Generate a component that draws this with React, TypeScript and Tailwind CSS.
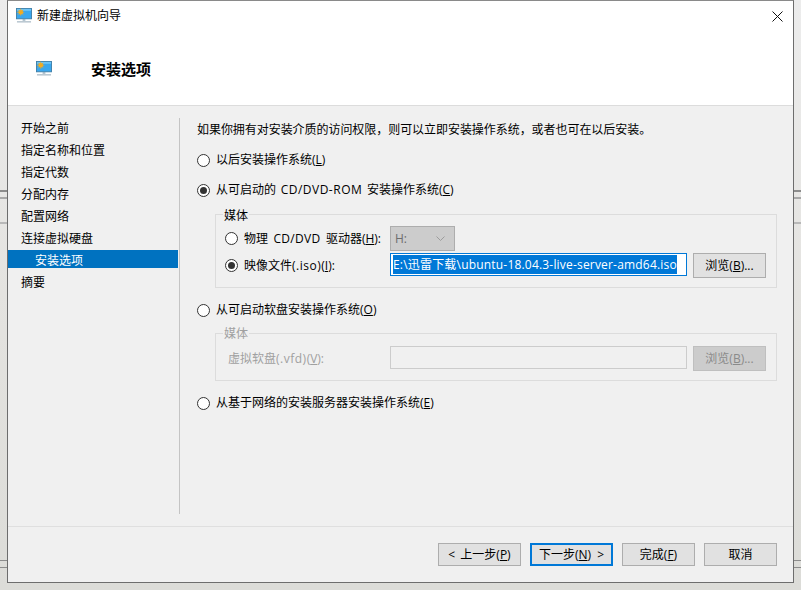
const steps = ["开始之前", "指定名称和位置", "指定代数", "分配内存", "配置网络", "连接虚拟硬盘"];

function MonitorIcon({ className = "" }: { className?: string }) {
  return (
    <svg width="16" height="15" viewBox="0 0 17 16" className={`shrink-0 ${className}`}>
      <rect x="0.5" y="0.5" width="16" height="11" fill="#3aa7ee" stroke="#3f7fa8" />
      <rect x="1" y="1" width="15" height="2" fill="#6cc4f7" />
      <circle cx="5" cy="4.5" r="2.4" fill="#f6b426" />
      <path d="M5 0.8V8.2M1.3 4.5H8.7M2.4 1.9L7.6 7.1M7.6 1.9L2.4 7.1" stroke="#f3a81c" strokeWidth="0.9" />
      <rect x="7" y="12" width="3" height="1.5" fill="#8fa9ba" />
      <rect x="1" y="14" width="15" height="1.5" fill="#b3c2cc" />
    </svg>
  );
}

function Radio({ checked }: { checked?: boolean }) {
  return (
    <span className="flex h-[13px] w-[13px] shrink-0 items-center justify-center rounded-full border border-[#333333] bg-white">
      {checked && <span className="h-[7px] w-[7px] rounded-full bg-[#333333]" />}
    </span>
  );
}

function RadioRow({ label, hot, checked, className }: { label: React.ReactNode; hot: string; checked?: boolean; className: string }) {
  return (
    <div className={`flex h-5 items-center ${className}`}>
      <Radio checked={checked} />
      <span className="ml-[6px] whitespace-nowrap">
        {label}(<u>{hot}</u>)
      </span>
    </div>
  );
}

function Button({ children, className = "" }: { children: React.ReactNode; className?: string }) {
  return (
    <button className={`flex h-[23px] items-center justify-center border border-[#adadad] bg-[#e1e1e1] text-[12px] ${className}`}>
      {children}
    </button>
  );
}

export default function App() {
  return (
    <div className="relative h-[590px] w-[801px] overflow-hidden bg-gradient-to-b from-[#ececec] via-[#e4e3e0] to-[#dcdcd8] font-['Open_Sans','Noto_Sans_CJK_SC',sans-serif] text-[12px] text-black">
      {/* window behind the dialog, only its edges show */}
      <div className="absolute left-0 top-[190px] h-[2px] w-full bg-[#8c8c8c]" />
      <div className="absolute left-0 top-[197px] h-[2px] w-full bg-[#a8a8a8]" />
      <div className="absolute left-0 top-[222px] h-[2px] w-full bg-[#b8b8b8]" />
      <div className="absolute left-0 top-[560px] h-px w-full bg-[#8c8c8c]" />
      <div className="absolute left-0 top-[567px] h-px w-full bg-[#8c8c8c]" />

      <div className="absolute left-[7px] top-0 flex h-[583px] w-[787px] flex-col border border-[#6d6d6d] border-t-[#8a8a8a] bg-[#f0f0f0]">
        <div className="h-[105px] shrink-0 border-b border-[#dcdcdc] bg-white">
          <div className="flex h-[30px] items-center pl-2">
            <MonitorIcon className="mb-px" />
            <span className="mb-px ml-[5px]">新建虚拟机向导</span>
            <svg width="11" height="11" viewBox="0 0 11 11" className="ml-auto mr-[10px]">
              <path d="M0.5 0.5L10.5 10.5M10.5 0.5L0.5 10.5" stroke="#111111" strokeWidth="1" />
            </svg>
          </div>
          <div className="flex items-center pl-[28px] pt-[29px]">
            <MonitorIcon className="mb-[2px]" />
            <span className="ml-[39px] text-[15px] font-bold leading-[18px]">安装选项</span>
          </div>
        </div>

        <div className="flex min-h-0 flex-1">
          <div className="w-[170px] shrink-0 pt-[12px]">
            {steps.map((s) => (
              <div key={s} className="flex h-[22px] items-center pl-[13px]">
                {s}
              </div>
            ))}
            <div className="mb-[4px] flex h-[18px] items-center bg-[#0072c0] pl-[27px] pt-[3px] text-white">安装选项</div>
            <div className="flex h-[22px] items-center pl-[13px]">摘要</div>
          </div>

          <div className="mt-[12px] mb-[11px] ml-px h-[396px] w-px shrink-0 bg-[#c4c4c4]" />

          <div className="ml-[17px] flex w-[580px] flex-col pt-[14px]">
            <div className="flex h-5 items-center whitespace-nowrap tracking-[-0.05px]">
              如果你拥有对安装介质的访问权限，则可以立即安装操作系统，或者也可在以后安装。
            </div>
            <RadioRow className="mt-[10px]" label="以后安装操作系统" hot="L" />
            <RadioRow
              className="mt-[10px]"
              label={
                <>
                  从可启动的<span className="tracking-[0.5px] [word-spacing:1px]"> CD/DVD-ROM </span>安装操作系统
                </>
              }
              hot="C"
              checked
            />

            <fieldset className="mt-[6px] ml-[18px] h-[82px] w-[562px] border border-[#dcdcdc] pl-[9px] pt-[4px]">
              <legend className="-ml-[2px] h-4 px-px leading-[20px]">媒体</legend>
              <div className="flex h-[25px] items-center">
                <Radio />
                <span className="ml-[6px] w-[146px] whitespace-nowrap">
                  物理<span className="tracking-[0.3px] [word-spacing:2px]"> CD/DVD </span>驱动器(<u>H</u>):
                </span>
                <div className="flex h-[25px] w-[65px] items-center justify-between border border-[#adadad] bg-[#cccccc] pl-[4px] pr-[9px] text-[#6d6d6d]">
                  H:
                  <svg width="9" height="5" viewBox="0 0 9 5">
                    <path d="M0.5 0.5L4.5 4.5L8.5 0.5" fill="none" stroke="#9c9c9c" />
                  </svg>
                </div>
              </div>
              <div className="mt-[2px] flex h-[25px] items-center">
                <Radio checked />
                <span className="ml-[6px] w-[146px] whitespace-nowrap">
                  映像文件<span className="tracking-[0.5px]">(.iso)</span>(<u>I</u>):
                </span>
                <div className="mb-[2px] flex h-[23px] w-[297px] items-center border border-[#0078d7] bg-white pl-[2px]">
                  <span className="flex h-[19px] items-center whitespace-nowrap bg-[#0078d7] tracking-[0.19px] text-white">
                    E:\迅雷下载\ubuntu-18.04.3-live-server-amd64.iso
                  </span>
                </div>
                <Button className="ml-[6px] w-[73px] !h-[25px]">
                  浏览(<u>B</u>)...
                </Button>
              </div>
            </fieldset>

            <RadioRow className="mt-[12px]" label="从可启动软盘安装操作系统" hot="O" />

            <fieldset className="mt-[5px] ml-[18px] h-[56px] w-[562px] border border-[#dcdcdc] pl-[12px] pt-[5px] text-[#a0a0a0]">
              <legend className="-ml-[5px] h-4 px-px leading-[18px]">媒体</legend>
              <div className="flex h-[25px] items-center">
                <span className="w-[162px] whitespace-nowrap">
                  虚拟软盘<span className="tracking-[0.5px]">(.vfd)</span>(<u>V</u>):
                </span>
                <div className="mb-[2px] h-[23px] w-[297px] border border-[#cccccc] bg-[#f0f0f0]" />
                <div className="ml-[6px] flex h-[25px] w-[73px] items-center justify-center border border-[#bfbfbf] bg-[#cccccc] text-[#8a8a8a]">
                  浏览(<u>B</u>)...
                </div>
              </div>
            </fieldset>

            <RadioRow className="mt-[12px]" label="从基于网络的安装服务器安装操作系统" hot="E" />
          </div>
        </div>

        <div className="flex h-[56px] shrink-0 items-start justify-end border-t border-[#dfdfdf] pr-[16px] pt-[16px]">
          <Button className="w-[83px] [word-spacing:2px]">
            &lt; 上一步(<u>P</u>)
          </Button>
          <Button className="ml-[9px] w-[83px] !border-2 !border-[#0078d7] [word-spacing:3px]">
            下一步(<u>N</u>) &gt;
          </Button>
          <Button className="ml-[9px] w-[73px]">
            完成(<u>F</u>)
          </Button>
          <Button className="ml-[9px] w-[73px]">取消</Button>
        </div>
      </div>
    </div>
  );
}
